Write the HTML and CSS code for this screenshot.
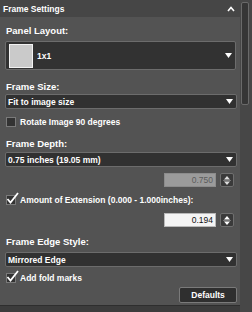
FILE: index.html
```html
<!DOCTYPE html>
<html lang="en">
<head>
  <meta charset="UTF-8" />
  <title>Frame Settings</title>
  <link rel="stylesheet" href="styles.css">
</head>
<body>
  <div class="window">
    <div class="main">
      <div class="header">
        <span>Frame Settings</span>
        <svg class="chevron" width="8" height="6" viewBox="0 0 8 6"><path d="M1 5 L4 1.5 L7 5" fill="none" stroke="#fff" stroke-width="1.6"/></svg>
      </div>
      <div class="body">
        <div class="label">Panel Layout:</div>
        <div class="layout-box">
          <div class="swatch"></div>
          <span class="layout-name">1x1</span>
          <svg class="arrow" width="7" height="5" viewBox="0 0 7 5"><path d="M0 0 H7 L3.5 5 Z" fill="#fff"/></svg>
        </div>

        <div class="label">Frame Size:</div>
        <div class="select">
          <span>Fit to image size</span>
          <svg class="arrow" width="7" height="5" viewBox="0 0 7 5"><path d="M0 0 H7 L3.5 5 Z" fill="#fff"/></svg>
        </div>
        <div class="check">
          <span class="box"></span>
          <span>Rotate Image 90 degrees</span>
        </div>

        <div class="label">Frame Depth:</div>
        <div class="select depth">
          <span>0.75 inches (19.05 mm)</span>
          <svg class="arrow" width="7" height="5" viewBox="0 0 7 5"><path d="M0 0 H7 L3.5 5 Z" fill="#fff"/></svg>
        </div>
        <div class="num-row">
          <div class="num disabled">0.750</div>
          <div class="spin">
            <svg width="10" height="11" viewBox="0 0 10 11"><path d="M2 4.5 H8 L5 1 Z M2 6.5 H8 L5 10 Z" fill="#ddd"/><path d="M1 5.5 H9" stroke="#777" stroke-width="1"/></svg>
          </div>
        </div>
        <div class="check extension">
          <span class="box">
            <svg class="tick" width="13" height="12" viewBox="0 0 13 12"><path d="M1.5 7 L4.5 10.5 L12 1" fill="none" stroke="#fff" stroke-width="1.8"/></svg>
          </span>
          <span>Amount of Extension (0.000 - 1.000inches):</span>
        </div>
        <div class="num-row">
          <div class="num">0.194</div>
          <div class="spin">
            <svg width="10" height="11" viewBox="0 0 10 11"><path d="M2 4.5 H8 L5 1 Z M2 6.5 H8 L5 10 Z" fill="#fff"/><path d="M1 5.5 H9" stroke="#777" stroke-width="1"/></svg>
          </div>
        </div>

        <div class="label edge-label">Frame Edge Style:</div>
        <div class="select edge">
          <span>Mirrored Edge</span>
          <svg class="arrow" width="7" height="5" viewBox="0 0 7 5"><path d="M0 0 H7 L3.5 5 Z" fill="#fff"/></svg>
        </div>
        <div class="check fold">
          <span class="box">
            <svg class="tick" width="13" height="12" viewBox="0 0 13 12"><path d="M1.5 7 L4.5 10.5 L12 1" fill="none" stroke="#fff" stroke-width="1.8"/></svg>
          </span>
          <span>Add fold marks</span>
        </div>
        <div class="footer">
          <button class="btn">Defaults</button>
        </div>
      </div>
    </div>
    <div class="scrollbar">
      <div class="thumb"></div>
    </div>
  </div>
</body>
</html>
```

FILE: styles.css
```css
body {
  margin: 0;
  background: #3c3c3c;
  font-family: "Liberation Sans", Arial, sans-serif;
  color: #fff;
}
.window {
  display: flex;
  width: 252px;
  height: 312px;
  overflow: hidden;
}
.main {
  width: 241px;
  height: 305px;
  background: #535353;
  border-bottom: 1px solid #2e2e2e;
  display: flex;
  flex-direction: column;
}
.header {
  height: 17px;
  background: #464646;
  display: flex;
  align-items: center;
  justify-content: space-between;
  padding: 0 5px 0 3px;
  font-size: 8.5px;
  font-weight: bold;
}
.body {
  padding: 8px 3px 0 5px;
  display: flex;
  flex-direction: column;
}
.label {
  font-size: 9.5px;
  font-weight: bold;
  line-height: 12px;
  height: 12px;
  padding-left: 1px;
}
.layout-box {
  margin-top: 4px;
  height: 27px;
  border: 1px solid #6c6c6c;
  border-radius: 2px;
  background: #323232;
  display: flex;
  align-items: center;
  padding: 0 3px 0 3px;
  margin-right: 1px;
  margin-bottom: 11px;
}
.swatch {
  width: 22px;
  height: 22px;
  background: #cacaca;
  border: 1px solid #f2f2f2;
}
.layout-name {
  font-size: 8.5px;
  font-weight: bold;
  margin-left: 4px;
  flex: 1;
}
.select {
  margin-top: 1px;
  height: 13px;
  border: 1px solid #6c6c6c;
  border-radius: 2px;
  background: #313131;
  display: flex;
  align-items: center;
  justify-content: space-between;
  padding: 0 3px 0 2px;
  font-size: 8.5px;
  font-weight: bold;
}
.select.depth {
  margin-top: 2px;
}
.select.edge {
  margin-top: 4px;
}
.arrow {
  flex: none;
}
.check {
  display: flex;
  align-items: center;
  height: 12px;
  margin: 7px 0 10px 1px;
  font-size: 8.5px;
  font-weight: bold;
}
.check.extension {
  margin: 7px 0 0 1px;
}
.check.fold {
  margin: 5px 0 0 1px;
}
.box {
  position: relative;
  width: 8px;
  height: 8px;
  border: 1px solid #7a7a7a;
  background: #333;
  margin-right: 4px;
}
.tick {
  position: absolute;
  left: -1px;
  top: -4px;
}
.num-row {
  display: flex;
  justify-content: flex-end;
  gap: 4px;
  margin-top: 6px;
  padding-right: 3px;
}
.check.extension + .num-row {
  margin-top: 7px;
}
.num {
  width: 48px;
  height: 12px;
  line-height: 12px;
  border: 1px solid #b9b9b9;
  background: #f4f4f4;
  color: #111;
  text-align: right;
  padding-right: 2px;
  font-size: 8.5px;
}
.num.disabled {
  background: #9b9b9b;
  border-color: #8c8c8c;
  color: #5c5c5c;
}
.spin {
  width: 12px;
  height: 12px;
  border: 1px solid #6f6f6f;
  border-radius: 2px;
  background: #3a3a3a;
  display: flex;
  align-items: center;
  justify-content: center;
}
.edge-label {
  margin-top: 9px;
}
.footer {
  display: flex;
  justify-content: flex-end;
  margin-top: 3px;
}
.btn {
  width: 58px;
  height: 16px;
  padding: 0;
  border: 1px solid #7a7a7a;
  border-radius: 2px;
  background: #2f2f2f;
  color: #fff;
  font-family: "Liberation Sans", Arial, sans-serif;
  font-size: 8.5px;
  font-weight: bold;
}
.scrollbar {
  width: 11px;
  background: #474747;
  padding: 2px 0 0 1px;
}
.thumb {
  width: 6px;
  height: 101px;
  border: 1px solid #6a6a6a;
  border-radius: 2px;
  background: #363636;
}
```
